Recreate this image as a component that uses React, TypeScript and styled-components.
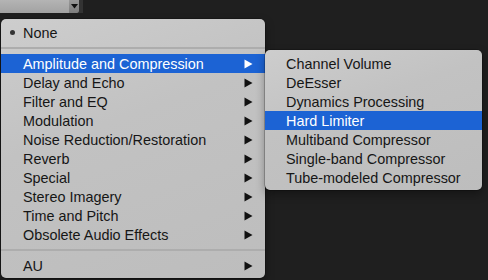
import React from "react";
import styled, { createGlobalStyle } from "styled-components";

const Global = createGlobalStyle`
  html, body { margin: 0; padding: 0; background: #1e1e1e; }
  body { font-family: "Liberation Sans", Arial, sans-serif; }
`;

const Page = styled.div`
  position: relative;
  width: 488px;
  height: 280px;
  overflow: hidden;
  background: #1f1f1f;
`;

const TopBar = styled.div`
  display: flex;
  height: 13px;
`;

const SelectBox = styled.div`
  width: 69px;
  background: linear-gradient(#b4b4b4, #a2a2a2);
`;

const SelectArrow = styled.div`
  width: 10px;
  display: flex;
  align-items: center;
  justify-content: center;
  background: linear-gradient(#999, #7d7d7d);
  border-radius: 0 0 2px 0;
`;

const Strip = styled.div`
  width: 4px;
  background: #333;
`;

const Menu = styled.div<{ $left: number; $top: number; $width: number }>`
  position: absolute;
  left: ${(p) => p.$left}px;
  top: ${(p) => p.$top}px;
  width: ${(p) => p.$width}px;
  padding: 4px 0 3px;
  border-radius: 5px;
  background: linear-gradient(160deg, #cdcdcd 0%, #c2c2c2 40%, #bdbdbd 100%);
  box-shadow: 0 0 0 0.5px rgba(0, 0, 0, 0.4), 0 4px 10px rgba(0, 0, 0, 0.35);
`;

const Row = styled.div<{ $active?: boolean; $indent: number }>`
  display: flex;
  align-items: center;
  height: 19px;
  padding-left: ${(p) => p.$indent}px;
  padding-right: 12px;
  background: ${(p) => (p.$active ? "#1c63d4" : "transparent")};
  color: ${(p) => (p.$active ? "#ffffff" : "#161616")};
  font-size: 14.4px;
  white-space: nowrap;
  position: relative;
`;

const Label = styled.span`
  flex: 1;
`;

const Bullet = styled.span`
  position: absolute;
  left: 9px;
  top: 7px;
  width: 5px;
  height: 5px;
  border-radius: 50%;
  background: #333;
`;

const Separator = styled.div`
  height: 12px;
  display: flex;
  align-items: center;
  &::after {
    content: "";
    flex: 1;
    height: 2px;
    background: #adadad;
  }
`;

const Arrow = ({ color }: { color: string }) => (
  <svg width="9" height="10" viewBox="0 0 9 10">
    <polygon points="0.5,0.5 8.5,5 0.5,9.5" fill={color} />
  </svg>
);

const categories = [
  "Amplitude and Compression",
  "Delay and Echo",
  "Filter and EQ",
  "Modulation",
  "Noise Reduction/Restoration",
  "Reverb",
  "Special",
  "Stereo Imagery",
  "Time and Pitch",
  "Obsolete Audio Effects",
];

const effects = [
  "Channel Volume",
  "DeEsser",
  "Dynamics Processing",
  "Hard Limiter",
  "Multiband Compressor",
  "Single-band Compressor",
  "Tube-modeled Compressor",
];

export default function App() {
  return (
    <>
      <Global />
      <Page>
        <TopBar>
          <SelectBox />
          <SelectArrow>
            <svg width="7" height="5" viewBox="0 0 7 5">
              <polygon points="0,0 7,0 3.5,4.5" fill="#111" />
            </svg>
          </SelectArrow>
          <Strip />
        </TopBar>

        <Menu $left={1} $top={19} $width={264}>
          <Row $indent={22}>
            <Bullet />
            <Label>None</Label>
          </Row>
          <Separator />
          {categories.map((c, i) => (
            <Row key={c} $indent={22} $active={i === 0}>
              <Label>{c}</Label>
              <Arrow color={i === 0 ? "#fff" : "#111"} />
            </Row>
          ))}
          <Separator />
          <Row $indent={22}>
            <Label>AU</Label>
            <Arrow color="#111" />
          </Row>
        </Menu>

        <Menu $left={265} $top={50} $width={217}>
          {effects.map((e) => (
            <Row key={e} $indent={21} $active={e === "Hard Limiter"}>
              <Label>{e}</Label>
            </Row>
          ))}
        </Menu>
      </Page>
    </>
  );
}
